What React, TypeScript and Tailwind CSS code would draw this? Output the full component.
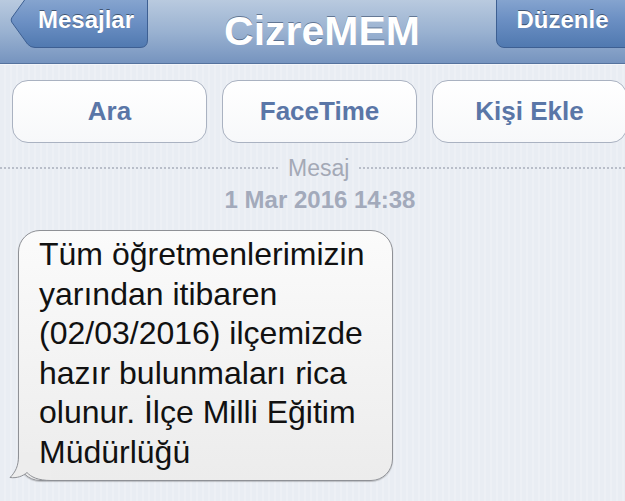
import React from "react";

// iOS 6 style Messages conversation header + single received bubble

const actions = ["Ara", "FaceTime", "Kişi Ekle"];

const lines = [
  "Tüm öğretmenlerimizin",
  "yarından itibaren",
  "(02/03/2016) ilçemizde",
  "hazır bulunmaları rica",
  "olunur. İlçe Milli Eğitim",
  "Müdürlüğü",
];

function BackButton({ label }: { label: string }) {
  return (
    <div className="relative -mt-[8px] ml-[10px] flex h-[56px] w-[138px] shrink-0 items-center justify-center pl-[14px]">
      <svg className="absolute inset-0" width="138" height="56" viewBox="0 0 138 56">
        <defs>
          <linearGradient id="backFill" x1="0" y1="0" x2="0" y2="1">
            <stop offset="0" stopColor="#8eabd3" />
            <stop offset="0.55" stopColor="#6b8fc3" />
            <stop offset="1" stopColor="#5079b0" />
          </linearGradient>
        </defs>
        <path
          d="M25 0.5 L130 0.5 Q137.5 0.5 137.5 8 L137.5 48 Q137.5 55.5 130 55.5 L25 55.5 Q20.5 55.5 17.5 52 L1.8 30.2 Q0.5 28 1.8 25.8 L17.5 4 Q20.5 0.5 25 0.5 Z"
          fill="url(#backFill)"
          stroke="#3d5f92"
          strokeWidth="1"
        />
      </svg>
      <span className="relative text-[24px] font-bold text-white [text-shadow:0_-1px_0_rgba(0,0,0,0.45)]">
        {label}
      </span>
    </div>
  );
}

export default function App() {
  return (
    <div
      className="h-[501px] w-[625px] overflow-hidden bg-[#eaeef4] bg-[repeating-linear-gradient(90deg,#e9edf3_0px,#e9edf3_4px,#edf0f5_4px,#edf0f5_6px)]"
      style={{ fontFamily: '"Liberation Sans", Arial, sans-serif' }}
    >
      {/* navigation bar */}
      <div className="flex h-[64px] items-center overflow-hidden border-b border-[#56739e] bg-gradient-to-b from-[#b9cadf] via-[#9ab2d1] to-[#7694bf] shadow-[0_1px_0_#f4f6fa]">
        <div className="self-start">
          <BackButton label="Mesajlar" />
        </div>
        <div className="flex-1 text-center text-[41px] leading-none font-bold text-white [text-shadow:0_-1px_0_rgba(40,60,90,0.55)]">
          CizreMEM
        </div>
        <div className="-mr-[8px] -mt-[8px] flex h-[56px] w-[137px] shrink-0 items-center justify-center self-start rounded-[8px] border border-[#3d5f92] bg-gradient-to-b from-[#8eabd3] via-[#6b8fc3] to-[#5079b0] pr-[4px]">
          <span className="text-[24px] font-bold text-white [text-shadow:0_-1px_0_rgba(0,0,0,0.45)]">
            Düzenle
          </span>
        </div>
      </div>

      {/* action buttons */}
      <div className="flex gap-[15px] px-[12px] pt-[16px]">
        {actions.map((a) => (
          <div
            key={a}
            className="flex h-[63px] w-[195px] shrink-0 items-center justify-center rounded-[16px] border border-[#aab2c1] bg-gradient-to-b from-white to-[#f7f8fa]"
          >
            <span className="text-[26px] font-bold text-[#5a76a7]">{a}</span>
          </div>
        ))}
      </div>

      {/* timestamp */}
      <div className="mt-[12px] flex items-center">
        <div className="w-[278px] border-t-2 border-dotted border-[#b9bec9]" />
        <span className="px-[10px] text-[23px] leading-[26px] text-[#a4a9b6]">Mesaj</span>
        <div className="flex-1 border-t-2 border-dotted border-[#b9bec9]" />
      </div>
      <div className="mt-[6px] pl-[15px] text-center text-[24px] leading-[26px] font-bold text-[#a3aabb]">
        1 Mar 2016 14:38
      </div>

      {/* message bubble */}
      <div className="relative ml-[18px] mt-[17px] w-[375px] rounded-[22px] border border-[#8f9196] bg-gradient-to-b from-[#fbfbfb] to-[#ececec] pb-[8px] pl-[20px] pt-[4px] shadow-[0_1px_1px_rgba(0,0,0,0.2)]">
        <svg
          className="absolute bottom-[-1px] left-[-10px]"
          width="42"
          height="29"
          viewBox="0 0 42 29"
        >
          <path
            d="M9.5 0 L9.5 4 C9.5 14 6.5 20 1 25.5 C8 26.5 14 24 18 20.5 C22 25 29 28.5 42 28.5 L42 0 Z"
            fill="#ededed"
          />
          <path
            d="M9.5 0 L9.5 4 C9.5 14 6.5 20 1 25.5 C8 26.5 14 24 18 20.5 C22 25 29 28.5 42 28.5"
            fill="none"
            stroke="#8f9196"
            strokeWidth="1"
          />
        </svg>
        <p className="relative whitespace-nowrap text-[32px] leading-[39.5px] text-[#111]">
          {lines.map((l, i) => (
            <React.Fragment key={i}>
              {l}
              {i < lines.length - 1 && <br />}
            </React.Fragment>
          ))}
        </p>
      </div>
    </div>
  );
}
